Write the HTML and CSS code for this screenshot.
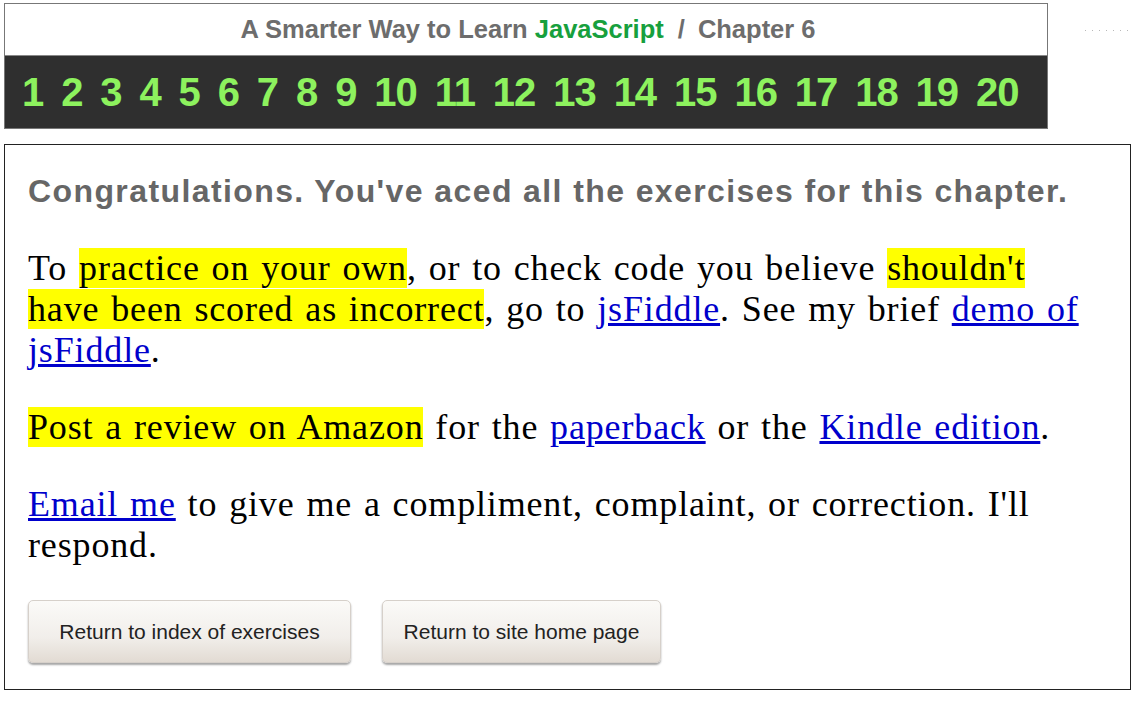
FILE: index.html
```html
<!DOCTYPE html>
<html>
<head>
<meta charset="utf-8">
<title>Chapter 6</title>
<link rel="stylesheet" href="styles.css">
</head>
<body>
<div class="top">
  <div class="header">
    <div class="title">A Smarter Way to Learn <span class="js">JavaScript</span><span class="sep">/</span>Chapter 6</div>
    <div class="chapters">
      <a>1</a><a>2</a><a>3</a><a>4</a><a>5</a><a>6</a><a>7</a><a>8</a><a>9</a><a>10</a><a>11</a><a>12</a><a>13</a><a>14</a><a>15</a><a>16</a><a>17</a><a>18</a><a>19</a><a>20</a>
    </div>
  </div>
  <div class="dots"></div>
</div>
<div class="panel">
  <h2 class="congrats">Congratulations. You've aced all the exercises for this chapter.</h2>
  <p class="text">To <span class="hl">practice on your own</span>, or to check code you believe <span class="hl">shouldn't</span><br><span class="hl">have been scored as incorrect</span>, go to <a href="#">jsFiddle</a>. See my brief <a href="#">demo of</a><br><a href="#">jsFiddle</a>.</p>
  <p class="text"><span class="hl">Post a review on Amazon</span> for the <a href="#">paperback</a> or the <a href="#">Kindle edition</a>.</p>
  <p class="text"><a href="#">Email me</a> to give me a compliment, complaint, or correction. I'll<br>respond.</p>
  <div class="buttons">
    <button class="btn btn-index">Return to index of exercises</button>
    <button class="btn btn-home">Return to site home page</button>
  </div>
</div>
</body>
</html>
```
FILE: styles.css
```css
html, body {
  margin: 0;
  padding: 0;
  background: #fff;
}
body {
  padding: 3px 0 0 4px;
}
.top {
  display: flex;
  align-items: flex-start;
}
.header {
  width: 1044px;
  border: 1px solid #777;
  box-sizing: border-box;
}
.title {
  height: 51px;
  display: flex;
  align-items: center;
  justify-content: center;
  font-family: "Liberation Sans", Arial, sans-serif;
  font-weight: bold;
  font-size: 25.5px;
  color: #6d6d6d;
  border-bottom: 1px solid #888;
  white-space: pre;
  padding-left: 4px;
}
.title .js {
  color: #17a03d;
}
.title .sep {
  margin: 0 13px 0 14px;
}
.chapters {
  background: #2f2f2f;
  height: 72px;
  display: flex;
  align-items: center;
  gap: 17.9px;
  padding-left: 17px;
  font-family: "Liberation Sans", Arial, sans-serif;
  font-weight: bold;
  font-size: 40px;
  letter-spacing: -1px;
  color: #8df25e;
}
.chapters a {
  cursor: pointer;
}
.dots {
  width: 46px;
  height: 1px;
  margin: 27px 0 0 37px;
  background: repeating-linear-gradient(90deg, #b8b8b8 0 1px, transparent 1px 7px);
}
.panel {
  margin-top: 15px;
  width: 1127px;
  height: 546px;
  box-sizing: border-box;
  border: 1px solid #222;
  padding: 0 10px 0 23px;
}
.congrats {
  margin: 28px 0 0 0;
  font-family: "Liberation Sans", Arial, sans-serif;
  font-weight: bold;
  font-size: 32px;
  letter-spacing: 1.4px;
  line-height: 36px;
  color: #666;
  white-space: nowrap;
}
.text {
  margin: 39px 0 0 0;
  font-family: "Liberation Serif", "Times New Roman", serif;
  font-size: 36px;
  letter-spacing: 0.85px;
  word-spacing: 2px;
  line-height: 41px;
  color: #000;
  white-space: nowrap;
}
.text + .text {
  margin-top: 36px;
}
.text a {
  color: #0000cc;
  text-decoration: underline;
}
.hl {
  background: #ffff00;
}
.buttons {
  display: flex;
  gap: 31px;
  margin-top: 34px;
}
.btn {
  height: 63px;
  border: 1px solid #d6d0ca;
  border-radius: 5px;
  background: linear-gradient(#fbfaf8, #f1eeea 60%, #e2dbd3);
  box-shadow: 0 2px 2px rgba(0, 0, 0, 0.35);
  font-family: "Liberation Sans", Arial, sans-serif;
  font-size: 21px;
  color: #222;
  padding: 0;
}
.btn-index {
  width: 323px;
}
.btn-home {
  width: 279px;
}
```
